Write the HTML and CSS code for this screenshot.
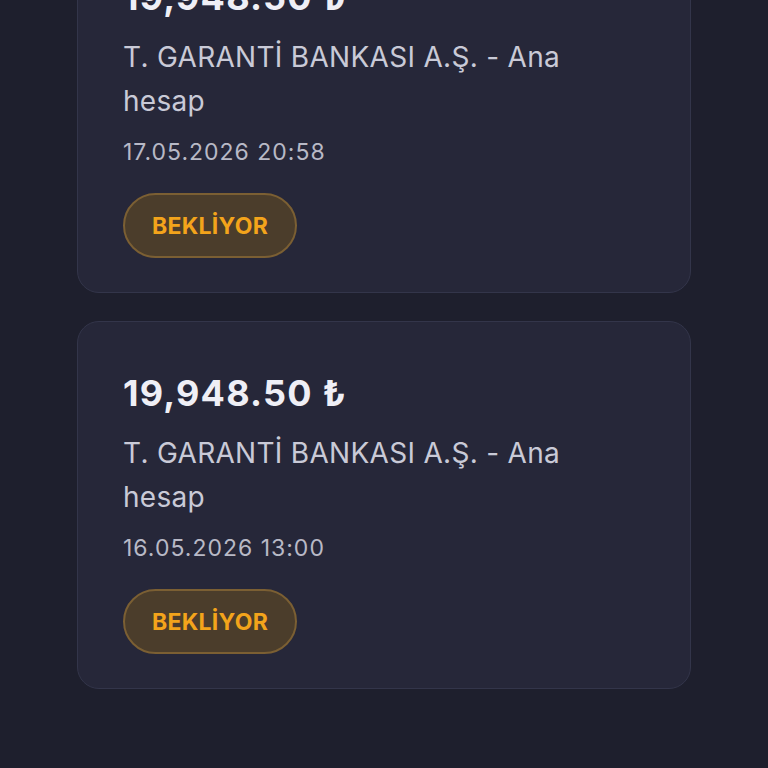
FILE: index.html
```html
<!DOCTYPE html>
<html lang="tr">
<head>
  <meta charset="UTF-8">
  <meta name="viewport" content="width=device-width, initial-scale=1.0">
  <title>Çekim Talepleri</title>
  <link rel="stylesheet" href="styles.css">
</head>
<body>
  <div class="list">
    <div class="card">
      <div class="amount">19,948.50 ₺</div>
      <p class="bank">T. GARANTİ BANKASI A.Ş. - Ana hesap</p>
      <div class="date">17.05.2026 20:58</div>
      <span class="badge">BEKLİYOR</span>
    </div>

    <div class="card">
      <div class="amount">19,948.50 ₺</div>
      <p class="bank">T. GARANTİ BANKASI A.Ş. - Ana hesap</p>
      <div class="date">16.05.2026 13:00</div>
      <span class="badge">BEKLİYOR</span>
    </div>
  </div>
</body>
</html>
```

FILE: styles.css
```css
html {
  background: #1e1f2d;
}
body {
  margin: 0;
  font-family: Inter, "Noto Sans", sans-serif;
  color: #eeeef5;
}
.list {
  display: flex;
  flex-direction: column;
  gap: 28px;
  width: 614px;
  margin: -75px auto 0; /* page is scrolled down a bit */
}
.card {
  display: flex;
  flex-direction: column;
  align-items: flex-start;
  height: 368px;
  box-sizing: border-box;
  padding: 50px 45px 34px;
  background-color: #262739;
  border: 1px solid #33354a;
  border-radius: 22px;
}
.amount {
  font-size: 36px;
  font-weight: 700;
  line-height: 43px;
  letter-spacing: 1.2px;
  color: #efeff6;
}
.bank {
  margin: 16px 0 0;
  max-width: 470px;
  font-size: 28px;
  line-height: 44px;
  letter-spacing: 0.3px;
  color: #c9cad7;
}
.date {
  margin-top: 11px;
  font-size: 23px;
  line-height: 36px;
  letter-spacing: 1px;
  color: #b8b9c6;
}
.badge {
  margin-top: 23px;
  display: flex;
  align-items: center;
  justify-content: center;
  width: 174px;
  height: 65px;
  box-sizing: border-box;
  border: 2px solid #7b5f33;
  border-radius: 33px;
  background-color: #4b3d2b;
  color: #f3a41b;
  font-size: 23px;
  font-weight: 700;
  letter-spacing: 0.3px;
}
```
